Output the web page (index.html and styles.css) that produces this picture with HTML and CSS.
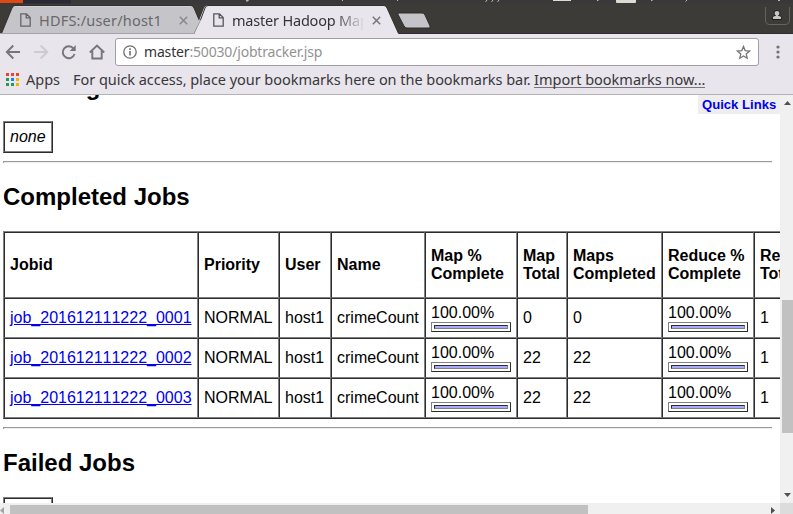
FILE: index.html
```html
<!DOCTYPE html>
<html lang="en">
<head>
<meta charset="utf-8">
<title>master Hadoop Map/Reduce Administration</title>
<link rel="stylesheet" href="styles.css">
</head>
<body>
<div class="window">
  <header class="tabstrip">
    <svg class="tab-shapes" width="793" height="34" viewBox="0 0 793 34">
      <defs><linearGradient id="bar" x1="0" y1="0" x2="0" y2="1"><stop offset="0" stop-color="#38373b"/><stop offset="1" stop-color="#3c3b37"/></linearGradient></defs>
      <rect width="793" height="34" fill="#3c3b37"/>
      <rect width="793" height="5" fill="url(#bar)"/>
      <path d="M0 0H23V3H0Z" fill="#dd4814"/>
      <path d="M23 0H71V3.500H23Z" fill="#2b2935"/>
      <path d="M246 0h3l-1 1.500h-2zM342 0h1v1h-1zM397 0h1v1h-1zM597 0h1.500v1h-1.500zM651 0h1.500v1h-1.500zM778 0h2v1h-2z" fill="#bbb8ac"/>
      <path d="M487 0l-1.500 2M493 0l-1.500 2M499 0l-1.500 2M687 0l-1.500 1.500" stroke="#bbb8ac"/>
      <path d="M553 0h18v1h-18zM616 0h20v2q0 1-1 1h-18q-1 0-1-1z" fill="#dfdbd2"/>
      <path d="M0 33.500H793" stroke="#302c2e"/>
      <path d="M1.500 33.500L12 8Q13 5.500 15 5.500H191Q193 5.500 194 8L200 22L194.500 33.500Z" fill="#c5c4c9" stroke="#33312f"/>
      <path d="M15 6.500H191" stroke="#d0cfd3"/>
      <path d="M194 33.500L204 8Q205 5.500 207 5.500H384Q386 5.500 387 8L398.500 33.500V34H194Z" fill="#e8e5ec"/>
      <path d="M194 33.500L200.500 20" stroke="#908f93" fill="none"/>
      <path d="M200.500 20L205 8Q206 5.500 208 5.500H384Q386 5.500 387 8L398.500 33.500" stroke="#33312f" fill="none"/>
      <path d="M0 33.500H195" stroke="#a5a3a8"/>
      <path d="M399 13H422Q424 13 425 15L430 26Q430.500 28 429 28H407Q405 28 404 26L398 14.500Q398 13 399 13Z" fill="#c5c4c9" stroke="#302f2c"/>
      <path d="M765.500 7V20Q765.500 24.500 770 24.500H785Q789.500 24.500 789.500 20V7" fill="none" stroke="#65645f"/>
      <path d="M772.500 19.500V17.500Q772.500 15.500 775.500 15.500Q774 14.500 774 13Q774 10.500 777 10.500Q780 10.500 780 13Q780 14.500 778.500 15.500Q781.500 15.500 781.500 17.500V19.500Z" fill="#c8c6c0" stroke="#1c1b19"/>
    </svg>
    <div class="tab tab-back">
      <svg class="doc" width="11" height="14" viewBox="0 0 11 14"><path d="M1 .8H6.500L10.200 4.500V13.200H.8V.8ZM6.200 1V4.800H10" fill="none" stroke="#656467" stroke-width="1.300"/></svg>
      <span class="tab-title title-back">HDFS:/user/host1</span>
      <svg class="close" width="9" height="9" viewBox="0 0 9 9"><path d="M.8.8L8.200 8.200M8.200.8L.8 8.200" stroke="#89888c" stroke-width="1.500"/></svg>
    </div>
    <div class="tab tab-front">
      <svg class="doc" width="11" height="14" viewBox="0 0 11 14"><path d="M1 .8H6.500L10.200 4.500V13.200H.8V.8ZM6.200 1V4.800H10" fill="none" stroke="#58575a" stroke-width="1.300"/></svg>
      <span class="tab-title title-front">master Hadoop Map</span>
      <svg class="close" width="9" height="9" viewBox="0 0 9 9"><path d="M.8.8L8.200 8.200M8.200.8L.8 8.200" stroke="#777679" stroke-width="1.500"/></svg>
    </div>
  </header>

  <div class="toolbar">
    <svg class="nav" width="110" height="28" viewBox="0 0 110 28" fill="none" stroke-width="1.900">
      <path d="M20 14H7M13.300 7.500L6.800 14L13.300 20.500" stroke="#77757a"/>
      <path d="M34 14H47M40.700 7.500L47.200 14L40.700 20.500" stroke="#cdcad1"/>
      <path d="M73.500 10.500A6 6 0 1 0 74.500 16" stroke="#77757a"/><path d="M75.700 7V13H69.700Z" fill="#77757a"/>
      <path d="M89.800 14.500L97 7.500L104.200 14.500M92.300 13V20.500H101.700V13" stroke="#77757a"/>
    </svg>
    <div class="omnibox">
      <svg class="info" width="14" height="14" viewBox="0 0 14 14"><circle cx="7" cy="7" r="6.200" fill="none" stroke="#6f6f6f" stroke-width="1.300"/><path d="M7 6V10.500M7 3.300V5" stroke="#666" stroke-width="1.500"/></svg>
      <span class="url"><b>master</b>:50030/jobtracker.jsp</span>
      <svg class="star" width="15" height="15" viewBox="0 0 15 15"><path d="M7.500 1.500L9.200 5.600L13.600 6L10.200 8.900L11.200 13.200L7.500 10.900L3.800 13.200L4.800 8.900L1.400 6L5.800 5.600Z" fill="none" stroke="#757575" stroke-width="1.300"/></svg>
    </div>
    <svg class="menu" width="4" height="14" viewBox="0 0 4 14" fill="#737176"><circle cx="2" cy="2" r="1.600"/><circle cx="2" cy="7" r="1.600"/><circle cx="2" cy="12" r="1.600"/></svg>
  </div>

  <div class="bookmarks">
    <svg class="apps" width="13" height="13" viewBox="0 0 13 13"><path d="M0 0h3v3H0zM5 0h3v3H5zM10 0h3v3h-3z" fill="#ea4335"/><path d="M0 5h3v3H0zM0 10h3v3H0zM5 10h3v3H5z" fill="#249b50"/><path d="M5 5h3v3H5z" fill="#2979f2"/><path d="M10 5h3v3h-3zM10 10h3v3h-3z" fill="#f6b000"/></svg>
    <span class="bm-apps">Apps</span>
    <span class="bm-hint">For quick access, place your bookmarks here on the bookmarks bar.</span>
    <a class="bm-import">Import bookmarks now...</a>
  </div>

  <div class="view">
    <main class="page">
      <h2>Running Jobs</h2>
      <table class="grid empty"><tr><td><i>none</i></td></tr></table>
      <hr>
      <h2>Completed Jobs</h2>
      <table class="grid jobs">
        <colgroup><col class="c-id"><col class="c-pri"><col class="c-user"><col class="c-name"><col class="c-pct"><col class="c-total"><col class="c-done"><col class="c-pct"><col class="c-rest"></colgroup>
        <tr class="head"><th>Jobid</th><th>Priority</th><th>User</th><th>Name</th><th>Map %<br>Complete</th><th>Map<br>Total</th><th>Maps<br>Completed</th><th>Reduce %<br>Complete</th><th>Reduce<br>Total</th></tr>
        <tr><td><a>job_201612111222_0001</a></td><td>NORMAL</td><td>host1</td><td>crimeCount</td><td>100.00%<div class="meter"><div></div></div></td><td>0</td><td>0</td><td>100.00%<div class="meter"><div></div></div></td><td>1</td></tr>
        <tr><td><a>job_201612111222_0002</a></td><td>NORMAL</td><td>host1</td><td>crimeCount</td><td>100.00%<div class="meter"><div></div></div></td><td>22</td><td>22</td><td>100.00%<div class="meter"><div></div></div></td><td>1</td></tr>
        <tr><td><a>job_201612111222_0003</a></td><td>NORMAL</td><td>host1</td><td>crimeCount</td><td>100.00%<div class="meter"><div></div></div></td><td>22</td><td>22</td><td>100.00%<div class="meter"><div></div></div></td><td>1</td></tr>
      </table>
      <hr>
      <h2>Failed Jobs</h2>
      <table class="grid empty"><tr><td></td></tr></table>
    </main>
    <a class="quick">Quick Links</a>
    <div class="vbar">
      <svg width="13" height="408" viewBox="0 0 13 408"><path d="M4 10L7.500 6L11 10Z" fill="#505050"/><path d="M2 205H13V338H2Z" fill="#c1c1c1"/><path d="M4 398H11L7.500 402Z" fill="#505050"/></svg>
    </div>
    <div class="hbar">
      <svg width="780" height="11" viewBox="0 0 780 11"><path d="M4 4V11L0 7.500Z" fill="#a3a3a3"/><path d="M10 2H588V11H10Z" fill="#c1c1c1"/><path d="M771 4V11L775 7.500Z" fill="#505050"/></svg>
    </div>
    <div class="corner"></div>
  </div>
</div>
</body>
</html>
```
FILE: styles.css
```css
* { box-sizing: border-box; }
body { margin: 0; overflow: hidden; }
.window { width: 793px; height: 514px; display: flex; flex-direction: column; background: #fff; overflow: hidden; }
svg { display: block; flex: none; }

/* Browser chrome */
.tabstrip { height: 34px; position: relative; display: flex; flex: none; padding-top: 6px; font: 14.5px/28px "Noto Sans", sans-serif; }
.tab-shapes { position: absolute; left: 0; top: 0; }
.tab { position: relative; display: flex; align-items: center; height: 28px; white-space: nowrap; }
.tab-back { width: 194px; padding-left: 20px; }
.tab-front { width: 200px; padding-left: 19px; }
.tab-title { overflow: hidden; flex: none; }
.title-back { width: 131px; margin-left: 8px; color: #69686b; letter-spacing: .2px; }
.title-front { width: 131px; margin-left: 8px; color: #353438; letter-spacing: -.2px; -webkit-mask-image: linear-gradient(to right, #000 102px, transparent 133px); mask-image: linear-gradient(to right, #000 102px, transparent 133px); }
.close { margin-left: 9px; }

.toolbar { height: 34px; flex: none; display: flex; align-items: flex-start; padding-top: 4px; background: #e8e5ec; }
.omnibox { margin-left: 5px; width: 644px; height: 28px; display: flex; align-items: center; border: 1px solid #a19fa5; border-radius: 3px; background: #fff; padding: 0 7px; }
.url { margin-left: 7px; color: #929292; font: 14px/26px "Noto Sans", sans-serif; letter-spacing: -.17px; }
.url b { font-weight: 400; color: #333; }
.star { margin-left: auto; }
.menu { margin: 7px 0 0 17px; }

.bookmarks { height: 27px; flex: none; display: flex; align-items: flex-start; background: #e8e5ec; border-bottom: 1px solid #b5b2b8; color: #38373a; font: 14.5px/22px "Noto Sans", sans-serif; padding-left: 6px; white-space: nowrap; }
.apps { margin-top: 5px; }
.bm-apps { width: 47px; margin-left: 7px; }
.bm-hint { width: 461px; letter-spacing: -.04px; }
.bm-import { border-bottom: 1px solid #77757a; height: 20px; }

/* Document viewport */
.view { height: 419px; flex: none; display: grid; grid-template: 408px 11px / 780px 13px; position: relative; }
.page { overflow: hidden; height: 408px; padding-left: 3px; color: #000; font: 16px/18px "Liberation Sans", Arial, sans-serif; }
.page h2 { font-size: 24px; line-height: 28px; margin: 20px 0; }
.page h2:first-child { margin-top: -22px; }
.page hr { width: 769px; height: 2px; margin: 8px 0; border: 0; border-top: 1px solid #9a9a9a; border-left: 1px solid #9a9a9a; background: #eee; }
.grid { border: 1px solid; border-color: #808080 #2c2c2c #2c2c2c #808080; border-spacing: 0; table-layout: fixed; }
.grid td, .grid th { border: 1px solid; border-color: #2c2c2c #808080 #808080 #2c2c2c; padding: 0 5px; text-align: left; vertical-align: middle; white-space: nowrap; }
.empty { width: 50px; }
.empty td { height: 30px; }
.jobs { width: 826px; }
.jobs tr { height: 40px; }
.jobs .head { height: 66px; }
.c-id { width: 194px; }
.c-pri { width: 81px; }
.c-user { width: 52px; }
.c-name { width: 94px; }
.c-pct { width: 92px; }
.c-total { width: 50px; }
.c-done { width: 95px; }
.c-rest { width: 74px; }
.jobs a { color: #0000ee; text-decoration: underline; font-kerning: none; }
.meter { width: 80px; height: 10px; border: 1px solid; border-color: #808080 #2c2c2c #2c2c2c #808080; padding: 2px; }
.meter div { height: 4px; border: 1px solid; border-color: #2c2c2c #808080 #808080 #2c2c2c; background: #aaaaff; }

.quick { position: absolute; top: 0; left: 698px; width: 82px; height: 19px; padding-left: 4px; background: #eee; color: #0000ee; font: bold 13.1px/19px "Liberation Sans", Arial, sans-serif; white-space: nowrap; }
.vbar, .hbar { background: #f0f0f0; }
.corner { background: #dcdcdc; }
```
